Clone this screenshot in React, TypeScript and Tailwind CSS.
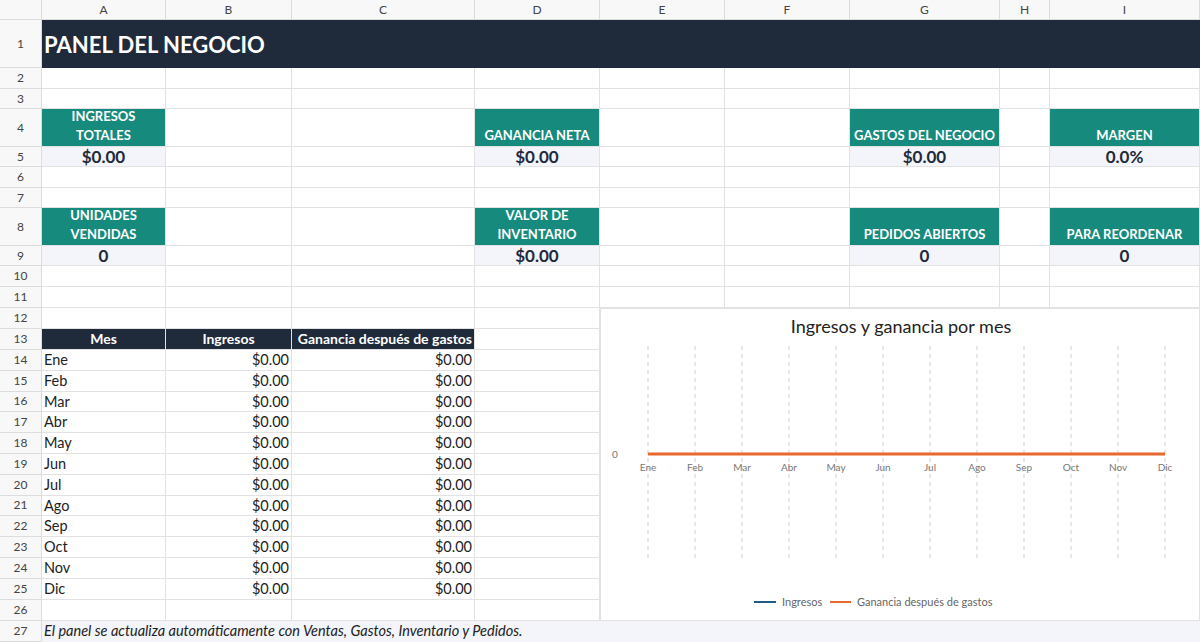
const font = { fontFamily: "Lato, 'Liberation Sans', sans-serif" };

const cols = "grid-cols-[42px_124px_126px_183px_125px_125px_125px_150px_50px_150px]";
const months = ["Ene", "Feb", "Mar", "Abr", "May", "Jun", "Jul", "Ago", "Sep", "Oct", "Nov", "Dic"];

type Cell = { text?: string; cls?: string };

const Row = ({ n, h, cells }: { n: number; h: string; cells: Record<number, Cell> }) => {
  const out = [];
  for (let i = 0; i < 9; i++) {
    const c = cells[i];
    if (c === undefined) {
      out.push(<div key={i} className="border-r border-b border-[#e2e2e2] bg-white" />);
    } else {
      out.push(
        <div key={i} className={`border-r border-b border-[#e2e2e2] overflow-hidden ${c.cls ?? ""}`}>
          {c.text}
        </div>
      );
    }
  }
  return (
    <div className={`grid ${cols} ${h}`}>
      <div className="bg-[#f8f8f8] border-r border-b border-[#dcdcdc] text-[12px] text-[#444] flex items-center justify-center">{n}</div>
      {out}
    </div>
  );
};

const label = "bg-[#178a7e] text-white font-bold text-[13px] text-center leading-[19px] flex flex-col justify-end pb-[1px]";
const value = "bg-[#f3f5fa] text-[#1f2a3b] font-bold text-[17px] text-center leading-[19px] whitespace-nowrap";

const Chart = () => {
  const x0 = 47, step = 47;
  return (
    <svg width="600" height="313" className="absolute left-[600px] top-[308px] bg-white border border-[#e2e2e2]">
      <text x="300" y="24" textAnchor="middle" fontSize="18" fill="#222" style={font}>Ingresos y ganancia por mes</text>
      {months.map((m, i) => {
        const x = x0 + i * step;
        return (
          <g key={m}>
            <line x1={x} x2={x} y1="37" y2="252" stroke="#cfcfcf" strokeDasharray="4 4" />
            <text x={x} y="162" textAnchor="middle" fontSize="10" fill="#777" style={font}>{m}</text>
          </g>
        );
      })}
      <text x="14" y="149" textAnchor="middle" fontSize="10" fill="#777" style={font}>0</text>
      <line x1={x0} x2={x0 + 11 * step} y1="145" y2="145" stroke="#e8692e" strokeWidth="3" />
      <line x1="153" x2="175" y1="293" y2="293" stroke="#1f5b8a" strokeWidth="2" />
      <text x="181" y="297" fontSize="11" fill="#666" style={font}>Ingresos</text>
      <line x1="229" x2="250" y1="293" y2="293" stroke="#e8692e" strokeWidth="2" />
      <text x="256" y="297" fontSize="11" fill="#666" style={font}>Ganancia después de gastos</text>
    </svg>
  );
};

export default function App() {
  const headers = ["A", "B", "C", "D", "E", "F", "G", "H", "I"];
  const base = "text-[14.5px] text-[#222] leading-[20px] whitespace-nowrap";
  const head = "bg-[#1f2a3b] text-white font-bold text-[14px] leading-[20px] border-[#1f2a3b] whitespace-nowrap";
  return (
    <div className="relative w-[1200px] h-[642px] overflow-hidden bg-white" style={font}>
      <div className={`grid ${cols} h-[20px]`}>
        <div className="bg-[#f8f8f8] border-r border-b border-[#dcdcdc]" />
        {headers.map((h) => (
          <div key={h} className="bg-[#f8f8f8] border-r border-b border-[#dcdcdc] text-[12px] text-[#444] flex items-center justify-center">{h}</div>
        ))}
      </div>
      <div className={`grid ${cols} h-[48px]`}>
        <div className="bg-[#f8f8f8] border-r border-b border-[#dcdcdc] text-[12px] text-[#444] flex items-center justify-center">1</div>
        <div className="col-span-9 bg-[#1f2a3b] text-white font-bold text-[22px] flex items-center pl-[2px]">PANEL DEL NEGOCIO</div>
      </div>
      <Row n={2} h="h-[21px]" cells={{}} />
      <Row n={3} h="h-[20px]" cells={{}} />
      <Row n={4} h="h-[38px]" cells={{
        0: { text: "INGRESOS TOTALES", cls: label + " px-6" },
        3: { text: "GANANCIA NETA", cls: label + " whitespace-nowrap" },
        6: { text: "GASTOS DEL NEGOCIO", cls: label + " whitespace-nowrap" },
        8: { text: "MARGEN", cls: label + " whitespace-nowrap" },
      }} />
      <Row n={5} h="h-[20px]" cells={{
        0: { text: "$0.00", cls: value }, 3: { text: "$0.00", cls: value },
        6: { text: "$0.00", cls: value }, 8: { text: "0.0%", cls: value },
      }} />
      <Row n={6} h="h-[21px]" cells={{}} />
      <Row n={7} h="h-[20px]" cells={{}} />
      <Row n={8} h="h-[38px]" cells={{
        0: { text: "UNIDADES VENDIDAS", cls: label + " px-5" },
        3: { text: "VALOR DE INVENTARIO", cls: label + " px-5" },
        6: { text: "PEDIDOS ABIERTOS", cls: label + " whitespace-nowrap" },
        8: { text: "PARA REORDENAR", cls: label + " whitespace-nowrap" },
      }} />
      <Row n={9} h="h-[20px]" cells={{
        0: { text: "0", cls: value }, 3: { text: "$0.00", cls: value },
        6: { text: "0", cls: value }, 8: { text: "0", cls: value },
      }} />
      <Row n={10} h="h-[21px]" cells={{}} />
      <Row n={11} h="h-[21px]" cells={{}} />
      <Row n={12} h="h-[21px]" cells={{}} />
      <Row n={13} h="h-[21px]" cells={{
        0: { text: "Mes", cls: head + " text-center" },
        1: { text: "Ingresos", cls: head + " text-center" },
        2: { text: "Ganancia después de gastos", cls: head + " text-right pr-[2px]" },
      }} />
      {months.map((m, i) => (
        <Row key={m} n={14 + i} h="h-[20.8px]" cells={{
          0: { text: m, cls: base + " pl-[2px]" },
          1: { text: "$0.00", cls: base + " text-right pr-[2px]" },
          2: { text: "$0.00", cls: base + " text-right pr-[2px]" },
        }} />
      ))}
      <Row n={26} h="h-[21px]" cells={{}} />
      <div className={`grid ${cols} h-[21px]`}>
        <div className="bg-[#f8f8f8] border-r border-b border-[#dcdcdc] text-[12px] text-[#444] flex items-center justify-center">27</div>
        <div className="col-span-9 bg-[#f3f5fa] italic text-[14.5px] text-[#222] leading-[20px] pl-[2px]">
          El panel se actualiza automáticamente con Ventas, Gastos, Inventario y Pedidos.
        </div>
      </div>
      <Chart />
    </div>
  );
}
